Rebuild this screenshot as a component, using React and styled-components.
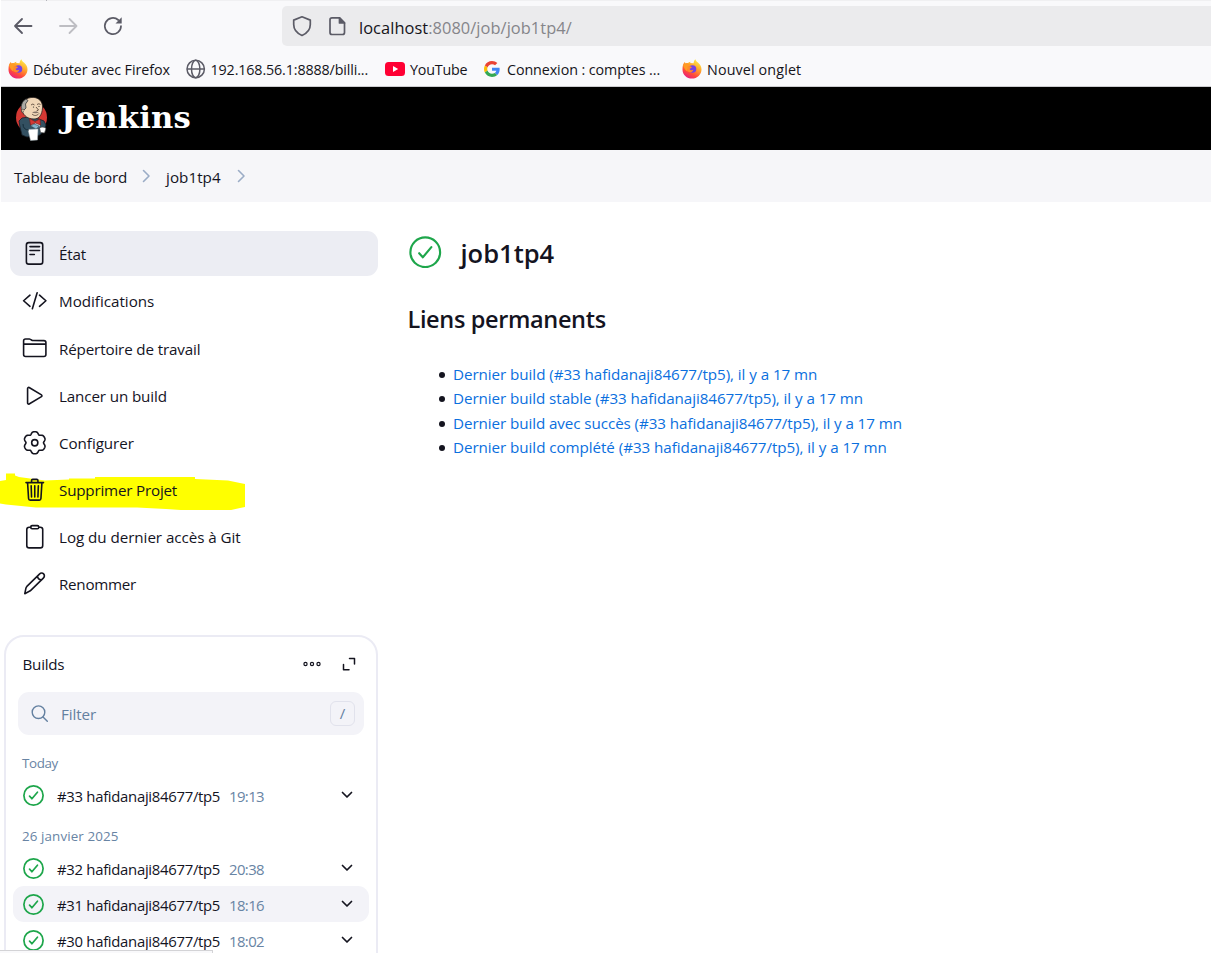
import React from "react";
import styled, { createGlobalStyle } from "styled-components";

const Global = createGlobalStyle`
  * { box-sizing: border-box; }
  body { margin: 0; background: #fff; overflow: hidden; font-family: "Open Sans", "Noto Sans", sans-serif; font-size: 15.2px; color: #14141f; }
  svg { display: block; flex: none; }
`;

const Window = styled.div`
  height: 953px;
  overflow: hidden;
  padding-left: 1px;
  position: relative;
`;

/* browser chrome */
const Chrome = styled.div`
  height: 87px;
  background: #f9f9fb;
  border-bottom: 1px solid #cccccf;
  display: flex;
  flex-direction: column;
`;
const TabEdge = styled.div`
  height: 1px;
  background: #f0f0f2;
  &::before { content: ""; display: block; width: 1px; height: 1px; margin-left: 45px; background: #b4b4ba; }
`;
const Toolbar = styled.div`
  height: 51px;
  display: flex;
  align-items: center;
  padding-left: 9px;
`;
const NavButtons = styled.div`
  display: flex;
  width: 272px;
  gap: 19px;
  margin-top: -1px;
`;
const UrlBar = styled.div`
  flex: 1;
  height: 40px;
  margin-top: -1px;
  background: #ebebed;
  border-radius: 5px 0 0 5px;
  display: flex;
  align-items: center;
  padding-left: 8px;
`;
const Url = styled.span`
  margin: 3px 0 0 9px;
  font-size: 16.4px;
  letter-spacing: ${(p) => p.$track}px;
  color: #85858a;
  white-space: nowrap;
  b { font-weight: 400; color: #15141a; }
`;
const Bookmarks = styled.div`
  display: flex;
  align-items: center;
  height: 34px;
  padding-left: 7px;
`;
const Bookmark = styled.div`
  display: flex;
  align-items: center;
  gap: ${(p) => p.$gap || 5}px;
  width: ${(p) => p.$w}px;
  font-size: 14.3px;
  color: #15141a;
  letter-spacing: ${(p) => p.$track || 0}px;
  white-space: nowrap;
`;

/* Jenkins header */
const Header = styled.header`
  height: 63px;
  background: #000;
  display: flex;
  align-items: center;
  padding-left: 13px;
`;
const Brand = styled.span`
  color: #fff;
  font: bold 30.7px/40px "DejaVu Serif", serif;
  letter-spacing: ${(p) => p.$track}px;
  margin: -4px 0 0 13px;
`;
const Breadcrumbs = styled.nav`
  height: 52px;
  background: #f6f6f9;
  display: flex;
  align-items: center;
  padding: 1px 0 0 13px;
  svg { margin-top: -1px; }
`;
const Crumb = styled.span`
  width: ${(p) => p.$w}px;
  letter-spacing: ${(p) => p.$track || 0}px;
  white-space: nowrap;
`;

/* page body */
const Page = styled.div`
  display: flex;
  height: 751px;
`;
const Side = styled.aside`
  width: 398px;
  flex: none;
  padding: 29px 0 0 9px;
`;
const Tasks = styled.div`
  display: flex;
  flex-direction: column;
  gap: 2.1px;
`;
const Task = styled.div`
  position: relative;
  width: 368px;
  height: 45px;
  border-radius: 11px;
  background: ${(p) => (p.$active ? "#ecedf3" : "transparent")};
  display: flex;
  align-items: center;
  gap: 12px;
  padding: 1px 0 0 11.5px;
  svg { position: relative; }
`;
const Label = styled.span`
  position: relative;
  padding-top: 0.8px;
  letter-spacing: ${(p) => p.$track || 0}px;
  white-space: nowrap;
`;
const Marker = styled.svg`
  && { position: absolute; left: -10px; top: 0; }
`;

const Card = styled.section`
  margin: 29px 0 0 -6px;
  width: 374px;
  height: 340px;
  border: 2px solid #ebebf4;
  border-radius: 20px;
  padding: 0 6px 0 7px;
`;
const CardHead = styled.div`
  height: 55px;
  display: flex;
  align-items: center;
  padding: 0 13px 0 9.5px;
`;
const CardTitle = styled.span`
  flex: 1;
  font-size: 15.2px;
  letter-spacing: -0.25px;
`;
const Filter = styled.div`
  height: 43px;
  margin: 0 4px 0 5px;
  width: 346px;
  background: #f3f3f8;
  border-radius: 11px;
  display: flex;
  align-items: center;
  padding: 0 9px 0 12px;
  color: #6480a0;
  span { flex: 1; margin: 1px 0 0 12px; letter-spacing: -0.1px; }
`;
const Key = styled.kbd`
  width: 25px;
  height: 25px;
  border: 1px solid #e1e2ec;
  border-radius: 6px;
  font: 15px/23px "Open Sans", sans-serif;
  text-align: center;
`;
const Day = styled.div`
  height: ${(p) => p.$h}px;
  padding: ${(p) => p.$top}px 0 0 9px;
  font-size: 13.4px;
  line-height: 18px;
  letter-spacing: ${(p) => p.$track || 0}px;
  color: #6884a4;
`;
const Build = styled.div`
  height: 36px;
  width: 356px;
  border-radius: 11px;
  background: ${(p) => (p.$hover ? "#f3f3f8" : "transparent")};
  display: flex;
  align-items: center;
  padding: 0 16.5px 0 10px;
`;
const BuildName = styled.span`
  width: 172px;
  margin: 2px 0 0 13px;
  font-size: 14.9px;
  letter-spacing: ${(p) => p.$track}px;
  white-space: nowrap;
`;
const Time = styled.span`
  flex: 1;
  margin-top: 2px;
  font-size: 14.9px;
  color: #6884a4;
  letter-spacing: -0.6px;
`;

const Main = styled.main`
  padding: 31px 0 0 9px;
`;
const TitleRow = styled.div`
  display: flex;
  align-items: center;
  height: 38px;
  gap: 19px;
  padding-left: 1px;
`;
const Title = styled.h1`
  margin: 2px 0 0;
  font-size: 25.5px;
  font-weight: 600;
  letter-spacing: ${(p) => p.$track}px;
  line-height: 36px;
`;
const Subtitle = styled.h2`
  margin: 31px 0 0 -0.5px;
  font-size: 23.5px;
  font-weight: 600;
  letter-spacing: ${(p) => p.$track}px;
  line-height: 34px;
`;
const Links = styled.ul`
  margin: 26px 0 0;
  padding: 0;
  list-style: none;
`;
const Item = styled.li`
  display: flex;
  align-items: center;
  height: 24.3px;
  padding-left: 31px;
  &::before { content: ""; width: 6px; height: 6px; margin-top: 2px; border-radius: 50%; background: #14141f; }
`;
const Link = styled.a`
  margin-left: 8px;
  color: #0b6fde;
  letter-spacing: ${(p) => p.$track}px;
  white-space: nowrap;
`;
const StatusPanel = styled.div`
  position: absolute;
  left: 0;
  bottom: 0;
  width: 213px;
  height: 3px;
  background: #f9f9fb;
  border: solid #d3d3d6;
  border-width: 1px 1px 0 0;
`;

const Ion = ({ children, size = 25.5 }) => (
  <svg width={size} height={size} viewBox="0 0 512 512" fill="none" stroke="#14141f" strokeWidth="32" strokeLinecap="round" strokeLinejoin="round">
    {children}
  </svg>
);

/* six-lobed cog outline, flat on the lobes and narrow in the notches */
const cogPath =
  "M" +
  Array.from({ length: 120 }, (_, i) => {
    const a = (i / 120) * Math.PI * 2;
    const notch = Math.pow(0.5 - 0.5 * Math.cos(6 * a), 2);
    const r = 222 - 46 * notch;
    return `${(256 + r * Math.sin(a)).toFixed(1)} ${(256 - r * Math.cos(a)).toFixed(1)}`;
  }).join("L") +
  "Z";

const icons = {
  status: <Ion><rect x="88" y="32" width="328" height="432" rx="48" /><path d="M160 112h192M160 192h192M160 272h88" /></Ion>,
  changes: <Ion><path d="M160 368L32 256l128-112M352 368l128-112-128-112M304 96l-96 320" /></Ion>,
  folder: <Ion><path d="M440 432H72a40 40 0 01-40-40V120a40 40 0 0140-40h76a40 40 0 0122 7l28 18a40 40 0 0022 7h220a40 40 0 0140 40v240a40 40 0 01-40 40zM32 184h448" /></Ion>,
  play: <Ion><path d="M112 111v290c0 17.4 17 28.5 31 20.2l248-148.4c12-7.3 12-26.3 0-33.6L143 90.8c-14-8.3-31 2.8-31 20.2z" /></Ion>,
  gear: <Ion><circle cx="256" cy="256" r="62" /><path d={cogPath} /></Ion>,
  trash: <Ion><path d="M112 112l20 320c1 18.500 14.400 32 32 32h184c17.700 0 30.900-13.500 32-32l20-320M80 112h352M192 112V72a24 24 0 0124-24h80a24 24 0 0124 24v40M256 176v224M184 176l8 224M328 176l-8 224" /></Ion>,
  clipboard: <Ion><path d="M336 64h32a48 48 0 0148 48v320a48 48 0 01-48 48H144a48 48 0 01-48-48V112a48 48 0 0148-48h32" /><rect x="176" y="32" width="160" height="64" rx="26" /></Ion>,
  pencil: <Ion><path d="M56 456l22-108Q83 326 98 310L350 62c28-28 62-26 84-4s22 56-6 84L176 388q-16 16-38 24zM310 104q8 68 82 78" /></Ion>,
};

const Check = ({ size, weight = 34 }) => (
  <svg width={size} height={size} viewBox="0 0 512 512" fill="none" stroke="#1ea64b" strokeWidth={weight} strokeLinecap="round" strokeLinejoin="round">
    <circle cx="256" cy="256" r="234" />
    <path d="M352 176L217.600 336 160 272" />
  </svg>
);
const Chevron = () => (
  <svg width="12" height="12" viewBox="0 0 12 12" fill="none" stroke="#14141f" strokeWidth="1.700" strokeLinecap="round" strokeLinejoin="round"><path d="M1.500 3.500L6 8l4.500-4.500" /></svg>
);
const Sep = ({ w }) => (
  <svg width={w} height="14" viewBox={`0 0 ${w} 14`} fill="none" stroke="#9bacc6" strokeWidth="1.600" strokeLinecap="round" strokeLinejoin="round"><path d="M1.500 1.500L7 7l-5.500 5.500" /></svg>
);

const Firefox = ({ id }) => (
  <svg width="20" height="20" viewBox="0 0 20 20">
    <defs>
      <linearGradient id={id} x1="0.8" y1="0" x2="0.25" y2="1">
        <stop offset="0" stopColor="#fff44f" /><stop offset="0.4" stopColor="#ffa42b" /><stop offset="0.72" stopColor="#ff4b3a" /><stop offset="1" stopColor="#e51a86" />
      </linearGradient>
    </defs>
    <path fill={`url(#${id})`} d="M.6 8.200C.8 6.200 1.500 4.300 2.800 3l.8 1.500C4.400 4.200 5.200 4 6 4.100 6.700 3.300 7.500 2.900 8.400 2.800L8.200 4l3.400.2C11.700 2.400 12.300 1 13.400.2c.4 1.500 1.400 2.400 2.800 3.500 2.100 1.800 3.300 3.900 3.300 6.700 0 5-4.300 9.200-9.500 9.200S.5 15.700.5 10.700z" />
    <path fill="#ff9a24" d="M1 6c2-2 5-2 7.500 0l-1 2.500c-1.500.5-2.500 2-1.700 4C3.500 12 2 9 1 6z" />
    <circle cx="10.500" cy="10" r="3.800" fill="#7542e5" />
    <path fill="#ff8a28" d="M5.500 7.500c2-.7 3.500-.3 4.500.7-.4.900-1.900 1-2.400 1.700.7 1.400 2.400 1.700 3.700.6-.3 2.800-3.700 3.800-5.500 1.700z" />
  </svg>
);
const Globe = () => (
  <svg width="20" height="20" viewBox="0 0 20 20" fill="none" stroke="#5b5b66" strokeWidth="1.500">
    <circle cx="9.700" cy="10" r="8.700" /><ellipse cx="9.700" cy="10" rx="4.200" ry="8.700" /><path d="M1 10h17.400" />
  </svg>
);
const YouTube = () => (
  <svg width="20" height="14" viewBox="0 0 20 14"><rect width="20" height="14" rx="3.500" fill="#ff0033" /><path d="M8 4l5.200 3L8 10z" fill="#fff" /></svg>
);
const Google = () => (
  <svg width="16" height="16" viewBox="0 0 48 48">
    <path fill="#EA4335" d="M24 9.500c3.540 0 6.710 1.220 9.210 3.600l6.850-6.850C35.900 2.380 30.470 0 24 0 14.620 0 6.510 5.380 2.560 13.220l7.980 6.190C12.430 13.720 17.740 9.500 24 9.500z" />
    <path fill="#4285F4" d="M46.980 24.550c0-1.570-.15-3.090-.38-4.550H24v9.020h12.940c-.58 2.960-2.260 5.480-4.780 7.180l7.730 6c4.510-4.180 7.090-10.360 7.090-17.650z" />
    <path fill="#FBBC05" d="M10.530 28.590c-.48-1.450-.76-2.990-.76-4.590s.27-3.140.76-4.590l-7.980-6.190C.92 16.460 0 20.120 0 24c0 3.880.92 7.540 2.560 10.780l7.970-6.190z" />
    <path fill="#34A853" d="M24 48c6.480 0 11.930-2.130 15.890-5.810l-7.730-6c-2.150 1.450-4.920 2.300-8.160 2.300-6.260 0-11.570-4.220-13.470-9.910l-7.980 6.190C6.510 42.620 14.620 48 24 48z" />
  </svg>
);
const Butler = () => (
  <svg width="34" height="46" viewBox="0 0 34 46">
    <ellipse cx="17.500" cy="21.500" rx="15.500" ry="15.500" fill="#d33833" />
    <path d="M8 22l-3 3 1 6 2 8 5 2 13-2 4-5 2-5-2-4-5-2-10-2z" fill="#335061" stroke="#15202a" strokeWidth=".8" />
    <path d="M8 15C7 8 10 2.500 17 1.500c8-1 12 4.500 11.500 10.500C28 19 25 23 20 23c-6 0-10-3-12-8z" fill="#f0d6b7" stroke="#2b2320" strokeWidth=".8" />
    <path d="M8.500 17C5.500 11 8 5 12 3l2 1.500-2.500 3.500.5 4-2 2z" fill="#a9a8a3" stroke="#36393b" strokeWidth=".8" />
    <path d="M10 14c-2-2-3 0-1.500 2.500" fill="#f0d6b7" stroke="#57463b" strokeWidth=".8" />
    <path d="M17 9q2-2 3.500 0M23 8.500q2-1.500 3.500 0M22 11l2.500 3-2 1M18 18c2 2 5 2 7-.5" stroke="#49372d" fill="none" strokeWidth=".8" />
    <path d="M18 16.500q3.500-2 7 0-3.500 1.500-7 0z" fill="#837266" />
    <circle cx="19.500" cy="11" r=".6" fill="#222" /><circle cx="25" cy="10.500" r=".6" fill="#222" />
    <path d="M18 25l4 2 3-2 1 5-4 3-5-3z" fill="#b9d0dc" />
    <path d="M15.500 22.500l5.500 3 5-2.500.5 6-5-2-5 2z" fill="#d33833" stroke="#7c1712" strokeWidth=".6" />
    <path d="M20 28l5 2-3 3-5-3z" fill="#85b5cd" stroke="#223943" strokeWidth=".5" />
    <path d="M14 33.500l10-.5-.5 11-7 .5z" fill="#fff" stroke="#9cabb1" strokeWidth=".5" />
    <path d="M25.500 32c2-1.500 5-1 6.500.5l-1.500 4.500-4-.5z" fill="#fff" stroke="#444" strokeWidth=".7" />
    <path d="M9 28q0 6 6 6" stroke="#142b38" fill="none" />
  </svg>
);

const tasks = [
  ["status", "État", -0.2],
  ["changes", "Modifications", -0.02],
  ["folder", "Répertoire de travail", -0.15],
  ["play", "Lancer un build", -0.13],
  ["gear", "Configurer", -0.06],
  ["trash", "Supprimer Projet", -0.2],
  ["clipboard", "Log du dernier accès à Git", -0.05],
  ["pencil", "Renommer", -0.28],
];

const links = [
  ["Dernier build (#33 hafidanaji84677/tp5), il y a 17 mn", -0.06],
  ["Dernier build stable (#33 hafidanaji84677/tp5), il y a 17 mn", -0.07],
  ["Dernier build avec succès (#33 hafidanaji84677/tp5), il y a 17 mn", -0.08],
  ["Dernier build complété (#33 hafidanaji84677/tp5), il y a 17 mn", -0.06],
];

const BuildRow = ({ n, time, hover }) => (
  <Build $hover={hover}>
    <Check size={21} weight={42} />
    <BuildName $track={-0.3}>#{n} hafidanaji84677/tp5</BuildName>
    <Time>{time}</Time>
    <Chevron />
  </Build>
);

export default function App() {
  return (
    <Window>
      <Global />
      <Chrome>
        <TabEdge />
        <Toolbar>
          <NavButtons>
            <svg width="26" height="26" viewBox="0 0 26 26" fill="none" stroke="#5b5b66" strokeWidth="1.800" strokeLinecap="round" strokeLinejoin="round"><path d="M21.500 13H5M12 6l-7 7 7 7" /></svg>
            <svg width="26" height="26" viewBox="0 0 26 26" fill="none" stroke="#bebec3" strokeWidth="1.800" strokeLinecap="round" strokeLinejoin="round"><path d="M5 13h16.500M14.500 6l7 7-7 7" /></svg>
            <svg width="26" height="26" viewBox="0 0 26 26" fill="none" stroke="#5b5b66" strokeWidth="1.700" strokeLinecap="round"><path d="M21 13a8.100 8.100 0 11-2.700-6" /><path d="M21.700 4.300v6.200h-6.200z" fill="#5b5b66" stroke="none" /></svg>
          </NavButtons>
          <UrlBar>
            <svg width="24" height="24" viewBox="0 0 24 24" fill="none" stroke="#5b5b66" strokeWidth="1.700" strokeLinejoin="round"><path d="M12 2.800l8.300 3.300v4.400c0 4.500-3.300 8.800-8.300 11-5-2.200-8.300-6.500-8.300-11V6.100z" /></svg>
            <svg width="36" height="24" viewBox="0 0 36 24" fill="none" stroke="#5b5b66" strokeWidth="1.700" strokeLinejoin="round"><path d="M18 3.800h7.500l5 5v9.700a2 2 0 01-2 2h-10.500a2 2 0 01-2-2v-12.700a2 2 0 012-2z" /><path d="M25.500 3.800V9h5z" fill="#5b5b66" /></svg>
            <Url $track={0.06}><b>localhost</b>:8080/job/job1tp4/</Url>
          </UrlBar>
        </Toolbar>
        <Bookmarks>
          <Bookmark $w={177.500} $track={-0.05}><Firefox id="ff1" />Débuter avec Firefox</Bookmark>
          <Bookmark $w={199.500} $track={-0.13}><Globe />192.168.56.1:8888/billi...</Bookmark>
          <Bookmark $w={99} $track={-0.2}><YouTube />YouTube</Bookmark>
          <Bookmark $w={197.500} $gap={7} $track={-0.09}><Google />Connexion : comptes ...</Bookmark>
          <Bookmark $w={130} $gap={5.500} $track={0.14}><Firefox id="ff2" />Nouvel onglet</Bookmark>
        </Bookmarks>
      </Chrome>

      <Header>
        <Butler />
        <Brand $track={0.15}>Jenkins</Brand>
      </Header>
      <Breadcrumbs>
        <Crumb $w={128} $track={-0.18}>Tableau de bord</Crumb>
        <Sep w={24} />
        <Crumb $w={70.500} $track={0.05}>job1tp4</Crumb>
        <Sep w={23} />
      </Breadcrumbs>

      <Page>
        <Side>
          <Tasks>
            {tasks.map(([icon, label, track], i) => (
              <Task key={icon} $active={i === 0}>
                {icon === "trash" && (
                  <Marker width="246" height="44" viewBox="0 0 246 44">
                    <path fill="#ffff00" d="M0 17V15l6-1V7.500h9v2l4 1.500 11 1.500 15 2 24-1v-1h26v-1.500h100v2l33 1.500 12 2.500 5 1v23l-5 1-11 2.500h-41l-22-1.500-29-1.500H36L6 38.500l-6-1z" />
                  </Marker>
                )}
                {icons[icon]}
                <Label $track={track}>{label}</Label>
              </Task>
            ))}
          </Tasks>
          <Card>
            <CardHead>
              <CardTitle>Builds</CardTitle>
              <svg width="56" height="18" viewBox="0 0 56 18" fill="none" stroke="#14141f" strokeWidth="1.200" strokeLinecap="round" strokeLinejoin="round">
                <circle cx="4.500" cy="9" r="1.600" /><circle cx="11" cy="9" r="1.600" /><circle cx="17.500" cy="9" r="1.600" />
                <path strokeWidth="1.500" d="M48.500 3.500h5V9M42.500 9.500v5.300h5.500" />
              </svg>
            </CardHead>
            <Filter>
              <svg width="19" height="19" viewBox="0 0 19 19" fill="none" stroke="#6480a0" strokeWidth="1.400" strokeLinecap="round"><circle cx="8.500" cy="8.200" r="6.300" /><path d="M13 12.900l4.300 4.300" /></svg>
              <span>Filter</span>
              <Key>/</Key>
            </Filter>
            <Day $h={42.500} $top={19} $track={-0.4}>Today</Day>
            <BuildRow n={33} time="19:13" />
            <Day $h={37} $top={13.500} $track={0.1}>26 janvier 2025</Day>
            <BuildRow n={32} time="20:38" />
            <BuildRow n={31} time="18:16" hover />
            <BuildRow n={30} time="18:02" />
          </Card>
        </Side>
        <Main>
          <TitleRow>
            <Check size={32.500} />
            <Title $track={0}>job1tp4</Title>
          </TitleRow>
          <Subtitle $track={-0.35}>Liens permanents</Subtitle>
          <Links>
            {links.map(([text, track]) => (
              <Item key={text}><Link $track={track}>{text}</Link></Item>
            ))}
          </Links>
        </Main>
      </Page>
      <StatusPanel />
    </Window>
  );
}
